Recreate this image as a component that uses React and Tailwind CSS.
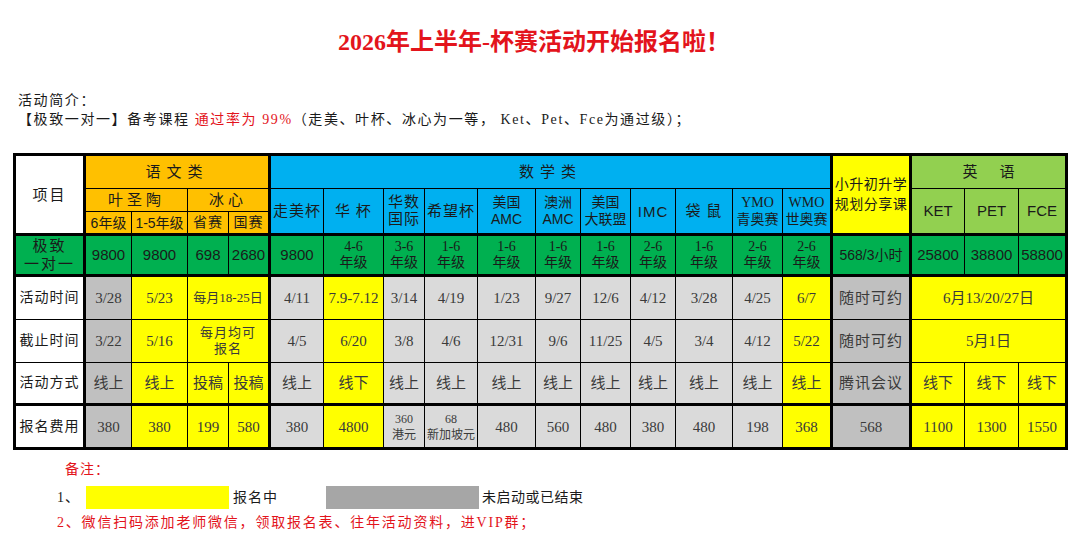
import React from "react";

const SERIF = "font-['Liberation_Serif','Noto_Sans_CJK_SC',serif]";
const SANS = "font-['Liberation_Sans','Noto_Sans_CJK_SC',sans-serif]";

// cell colours
const OR = "bg-[#FFC000]";
const BL = "bg-[#00B0F0]";
const YL = "bg-[#FFFF00]";
const LG = "bg-[#92D050]";
const GR = "bg-[#00B050]";
const G1 = "bg-[#C0C0C0]";
const G2 = "bg-[#DADADA]";
const W = "bg-white";

function Cell({ className = "", children }) {
  return (
    <div
      className={
        "flex items-center justify-center text-center whitespace-nowrap border-black leading-[16px] " +
        className
      }
    >
      {children}
    </div>
  );
}

function Two({ a, b }) {
  return (
    <div className="flex flex-col items-center">
      <span>{a}</span>
      <span>{b}</span>
    </div>
  );
}

const mathHead = [
  ["走美杯", null],
  ["华 杯", null],
  ["华数", "国际"],
  ["希望杯", null],
  ["美国", "AMC"],
  ["澳洲", "AMC"],
  ["美国", "大联盟"],
  ["IMC", null],
  ["袋 鼠", null],
  ["YMO", "青奥赛"],
  ["WMO", "世奥赛"],
];

const gradeRow = [
  "4-6", "3-6", "1-6", "1-6", "1-6", "1-6", "2-6", "1-6", "2-6", "2-6",
];

const body = [
  {
    label: "活动时间",
    cells: [
      ["3/28", G1],
      ["5/23", YL],
      ["每月18-25日", YL, "col-span-2 border-r-2 text-[13px]"],
      ["4/11", G2],
      ["7.9-7.12", YL],
      ["3/14", G2],
      ["4/19", G2],
      ["1/23", G2],
      ["9/27", G2],
      ["12/6", G2],
      ["4/12", G2],
      ["3/28", G2],
      ["4/25", G2],
      ["6/7", YL, "border-r-2"],
      ["随时可约", G1, "border-r-2 tracking-[1px]"],
      ["6月13/20/27日", YL, "col-span-3"],
    ],
  },
  {
    label: "截止时间",
    cells: [
      ["3/22", G1],
      ["5/16", YL],
      [<Two a="每月均可" b="报名" />, YL, "col-span-2 border-r-2 text-[13px] tracking-[1px]"],
      ["4/5", G2],
      ["6/20", YL],
      ["3/8", G2],
      ["4/6", G2],
      ["12/31", G2],
      ["9/6", G2],
      ["11/25", G2],
      ["4/5", G2],
      ["3/4", G2],
      ["4/12", G2],
      ["5/22", YL, "border-r-2"],
      ["随时可约", G1, "border-r-2 tracking-[1px]"],
      ["5月1日", YL, "col-span-3"],
    ],
  },
  {
    label: "活动方式",
    cells: [
      ["线上", G1],
      ["线上", YL],
      ["投稿", YL],
      ["投稿", YL, "border-r-2"],
      ["线上", G2],
      ["线下", YL],
      ["线上", G2],
      ["线上", G2],
      ["线上", G2],
      ["线上", G2],
      ["线上", G2],
      ["线上", G2],
      ["线上", G2],
      ["线上", G2],
      ["线上", YL, "border-r-2"],
      ["腾讯会议", G1, "border-r-2 tracking-[1px]"],
      ["线下", YL],
      ["线下", YL],
      ["线下", YL],
    ],
  },
  {
    label: "报名费用",
    top: true,
    cells: [
      ["380", G1],
      ["380", YL],
      ["199", YL],
      ["580", YL, "border-r-2"],
      ["380", G2],
      ["4800", YL],
      [<Two a="360" b="港元" />, G2, "text-[12px]"],
      [<Two a="68" b="新加坡元" />, G2, "text-[12px]"],
      ["480", G2],
      ["560", G2],
      ["480", G2],
      ["380", G2],
      ["480", G2],
      ["198", G2],
      ["368", YL, "border-r-2"],
      ["568", G1, "border-r-2"],
      ["1100", YL],
      ["1300", YL],
      ["1550", YL],
    ],
  },
];

export default function App() {
  return (
    <div className={"w-[1080px] h-[559px] bg-white text-[#1a1a1a] " + SERIF}>
      {/* 标题 */}
      <div className="pt-[28px] w-[1068px] text-center text-[24px] leading-[28px] font-bold text-[#E3141C]">
        2026年上半年-杯赛活动开始报名啦！
      </div>

      {/* 活动简介 */}
      <div className="mt-[35px] pl-[18px] text-[14px] leading-[19px] tracking-[1.6px]">
        <div>活动简介：</div>
        <div>
          【极致一对一】备考课程{" "}
          <span className="text-[#E3141C]">通过率为 99%</span>
          （走美、叶杯、冰心为一等， Ket、Pet、Fce为通过级）；
        </div>
      </div>

      {/* 表格 */}
      <div className="mt-[24px] ml-[13px] w-fit grid grid-cols-[69px_45px_55px_40px_41px_52px_59px_40px_52px_57px_44px_49px_44px_56px_49px_49px_78px_52px_53px_46px] grid-rows-[32px_22px_21px_42px_42px_42px_40px_43px] gap-px bg-black border-[3px] border-black text-[15px]">
        {/* 表头 第一行 */}
        <Cell className={W + " row-span-3 border-r-2 tracking-[2px]"}>项目</Cell>
        <Cell className={OR + " col-span-4 border-r-2 tracking-[6px]"}>语文类</Cell>
        <Cell className={BL + " col-span-11 border-r-2 tracking-[6px]"}>数学类</Cell>
        <Cell className={YL + " row-span-3 border-r-2 text-[14px] leading-[20px] tracking-[0.5px]"}>
          <Two a="小升初升学" b="规划分享课" />
        </Cell>
        <Cell className={LG + " col-span-3"}>
          <span>英</span>
          <span className="ml-[22px]">语</span>
        </Cell>

        {/* 表头 第二行 */}
        <Cell className={OR + " col-span-2 tracking-[4px]"}>叶圣陶</Cell>
        <Cell className={OR + " col-span-2 border-r-2 tracking-[4px]"}>冰心</Cell>
        {mathHead.map(([a, b], i) => (
          <Cell
            key={i}
            className={
              BL +
              " row-span-2 leading-[17px] " +
              (b && b.length === 3 ? "text-[14px] " : "tracking-[1px] ") +
              (i === 10 ? "border-r-2 " : "") +
              (a === "IMC" || b === "AMC" ? SANS : "")
            }
          >
            {b ? <Two a={a} b={b} /> : a}
          </Cell>
        ))}
        <Cell className={LG + " row-span-2 " + SANS}>KET</Cell>
        <Cell className={LG + " row-span-2 " + SANS}>PET</Cell>
        <Cell className={LG + " row-span-2 " + SANS}>FCE</Cell>

        {/* 表头 第三行 */}
        <Cell className={OR + " text-[14px] " + SANS}>6年级</Cell>
        <Cell className={OR + " text-[14px] " + SANS}>1-5年级</Cell>
        <Cell className={OR + " text-[14px] tracking-[1px]"}>省赛</Cell>
        <Cell className={OR + " text-[14px] tracking-[1px] border-r-2"}>国赛</Cell>

        {/* 极致一对一 */}
        <Cell className={GR + " border-y-2 border-r-2 tracking-[2px] leading-[18px]"}>
          <Two a="极致" b="一对一" />
        </Cell>
        {["9800", "9800", "698", "2680", "9800"].map((t, i) => (
          <Cell
            key={i}
            className={GR + " border-y-2 " + SANS + (i === 3 ? " border-r-2" : "")}
          >
            {t}
          </Cell>
        ))}
        {gradeRow.map((g, i) => (
          <Cell
            key={i}
            className={GR + " border-y-2 text-[14px] " + (i === 9 ? "border-r-2" : "")}
          >
            <Two a={g} b="年级" />
          </Cell>
        ))}
        <Cell className={GR + " border-y-2 border-r-2 text-[14px] " + SANS}>568/3小时</Cell>
        <Cell className={GR + " border-y-2 " + SANS}>25800</Cell>
        <Cell className={GR + " border-y-2 " + SANS}>38800</Cell>
        <Cell className={GR + " border-y-2 " + SANS}>58800</Cell>

        {/* 正文 */}
        {body.map((row) => (
          <React.Fragment key={row.label}>
            <Cell
              className={
                W +
                " border-r-2 tracking-[1px] text-[14px] " +
                (row.top ? "border-t-2" : "")
              }
            >
              {row.label}
            </Cell>
            {row.cells.map(([t, bg, cls], i) => (
              <Cell
                key={i}
                className={
                  bg +
                  " text-[#3a3a3a] " +
                  (cls || "") +
                  (row.top ? " border-t-2" : "")
                }
              >
                {t}
              </Cell>
            ))}
          </React.Fragment>
        ))}
      </div>

      {/* 备注 */}
      <div className="pl-[57px] text-[14px] leading-[20px] tracking-[1px]">
        <div className="mt-[10px] ml-[8px] text-[#E3141C]">备注：</div>
        <div className="mt-[6px] flex items-center">
          <span>1、</span>
          <span className="ml-[6px] w-[143px] h-[23px] bg-[#FFFF00]" />
          <span className="ml-[4px]">报名中</span>
          <span className="ml-[48px] w-[153px] h-[23px] bg-[#A6A6A6]" />
          <span className="ml-[3px] tracking-[0.5px]">未启动或已结束</span>
        </div>
        <div className="mt-[4px] text-[#E3141C] tracking-[1.8px]">
          2、微信扫码添加老师微信，领取报名表、往年活动资料，进VIP群；
        </div>
      </div>
    </div>
  );
}
